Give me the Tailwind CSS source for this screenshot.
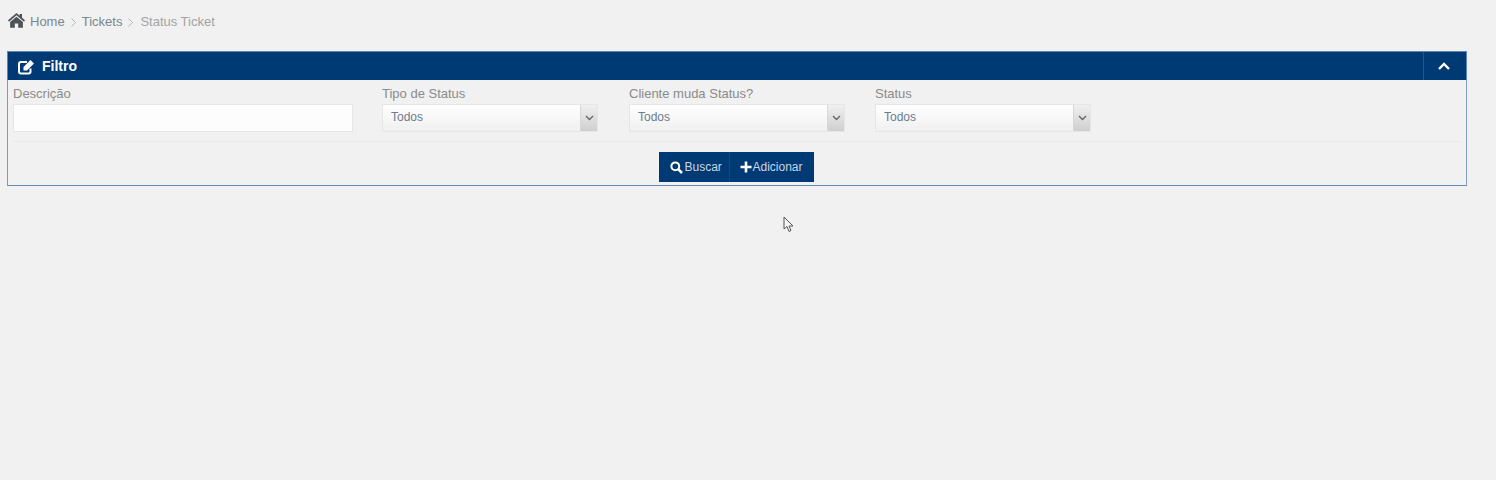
<!DOCTYPE html>
<html lang="en">
<head>
  <meta charset="UTF-8" />
  <title>Status Ticket</title>
  <script src="https://cdn.jsdelivr.net/npm/@tailwindcss/browser@4"></script>
</head>
<body class="bg-[#f1f1f1] h-[480px] overflow-hidden font-['Liberation_Sans',Arial,sans-serif]">

  <!-- Breadcrumb -->
  <nav class="h-[51px] pl-[8px] pt-[13px] flex items-start text-[13px] leading-[17px]">
    <svg class="w-[17px] h-[15px] text-[#4d5356]" viewBox="0 0 24 21" fill="currentColor">
      <path d="M12 0 L0 10.3 L1.4 12.2 L12 3.2 L22.6 12.2 L24 10.3 L19.8 6.7 V1.2 H16.4 V3.9 Z"/>
      <path d="M12 5.1 L3 12.6 V20.8 H9.6 V14.6 H14.4 V20.8 H21 V12.6 Z"/>
    </svg>
    <span class="ml-[5px] text-[#7a868d]">Home</span>
    <svg class="w-[5px] h-[9px] ml-[6px] mt-[5px] text-[#b5b5b5]" viewBox="0 0 5 9" fill="none" stroke="currentColor"><path d="M0.5 0.5 L4.5 4.5 L0.5 8.5"/></svg>
    <span class="ml-[6px] text-[#7a868d]">Tickets</span>
    <svg class="w-[5px] h-[9px] ml-[6px] mt-[5px] text-[#b5b5b5]" viewBox="0 0 5 9" fill="none" stroke="currentColor"><path d="M0.5 0.5 L4.5 4.5 L0.5 8.5"/></svg>
    <span class="ml-[7px] text-[#a3a3a3]">Status Ticket</span>
  </nav>

  <!-- Filter panel -->
  <section class="ml-[7px] w-[1460px] h-[135px] border border-[#7fa3cc] border-l-[#8f969c] border-b-[#5f8db5]">
    <header class="h-[29px] -mt-px -mx-px bg-[#003a75] border-t border-x border-[#5f86b2] flex items-center justify-between">
      <div class="flex items-center pl-[10px] pt-[1px] text-white">
        <svg class="w-[17px] h-[16px]" viewBox="0 0 17 16" fill="none">
          <path d="M12.5 9.5 V12.5 A2 2 0 0 1 10.5 14.5 H3 A2 2 0 0 1 1 12.5 V5 A2 2 0 0 1 3 3 H9" stroke="white" stroke-width="2"/>
          <path d="M5.5 8 L12.5 1 L16 4.5 L9 11.5 H5.5 Z" fill="white"/>
        </svg>
        <span class="ml-[7px] text-[14px] font-bold">Filtro</span>
      </div>
      <div class="w-[43px] h-full border-l border-[#22558a] flex items-center justify-center pr-[2px]">
        <svg class="w-[12px] h-[8px]" viewBox="0 0 12 8" fill="none" stroke="white" stroke-width="2.4"><path d="M1 7 L6 2 L11 7"/></svg>
      </div>
    </header>

    <!-- Fields -->
    <div class="flex pl-[5px] pt-[5px] text-[13px] text-[#8a8a8a]">
      <label class="block w-[340px]">
        <span class="block leading-[18px]">Descrição</span>
        <input class="block mt-[1px] w-full h-[28px] bg-[#fdfdfd] border border-[#e6e6e6] outline-none" />
      </label>
      <div class="w-[216px] ml-[29px]">
        <span class="block leading-[18px]">Tipo de Status</span>
        <div class="mt-[1px] h-[28px] flex border border-[#e6e6e6] bg-gradient-to-b from-white to-[#f0f0f0]">
          <span class="flex-1 pl-[8px] text-[12px] leading-[25px] text-[#6b7c8c]">Todos</span>
          <span class="w-[17px] border-l border-[#d8d8d8] bg-gradient-to-b from-[#f0f0f0] to-[#cfcfcf] flex items-center justify-center">
            <svg class="w-[9px] h-[6px]" viewBox="0 0 9 6" fill="none" stroke="#666" stroke-width="1.4"><path d="M1 1 L4.5 4.5 L8 1"/></svg>
          </span>
        </div>
      </div>
      <div class="w-[216px] ml-[31px]">
        <span class="block leading-[18px]">Cliente muda Status?</span>
        <div class="mt-[1px] h-[28px] flex border border-[#e6e6e6] bg-gradient-to-b from-white to-[#f0f0f0]">
          <span class="flex-1 pl-[8px] text-[12px] leading-[25px] text-[#6b7c8c]">Todos</span>
          <span class="w-[17px] border-l border-[#d8d8d8] bg-gradient-to-b from-[#f0f0f0] to-[#cfcfcf] flex items-center justify-center">
            <svg class="w-[9px] h-[6px]" viewBox="0 0 9 6" fill="none" stroke="#666" stroke-width="1.4"><path d="M1 1 L4.5 4.5 L8 1"/></svg>
          </span>
        </div>
      </div>
      <div class="w-[216px] ml-[30px]">
        <span class="block leading-[18px]">Status</span>
        <div class="mt-[1px] h-[28px] flex border border-[#e6e6e6] bg-gradient-to-b from-white to-[#f0f0f0]">
          <span class="flex-1 pl-[8px] text-[12px] leading-[25px] text-[#6b7c8c]">Todos</span>
          <span class="w-[17px] border-l border-[#d8d8d8] bg-gradient-to-b from-[#f0f0f0] to-[#cfcfcf] flex items-center justify-center">
            <svg class="w-[9px] h-[6px]" viewBox="0 0 9 6" fill="none" stroke="#666" stroke-width="1.4"><path d="M1 1 L4.5 4.5 L8 1"/></svg>
          </span>
        </div>
      </div>
    </div>

    <hr class="mt-[9px] mx-[5px] border-t border-[#e9e9e9]" />

    <!-- Buttons -->
    <div class="mt-[10px] flex justify-center pr-[2px]">
      <div class="flex h-[30px] text-[12px] text-[#c9d6e4] bg-[#003a75]">
        <button class="w-[71px] flex items-center gap-[2px] pl-[11px] border-r border-[#0a4a8c]">
          <svg class="w-[13px] h-[13px]" viewBox="0 0 13 13" fill="none" stroke="white"><circle cx="5.3" cy="5.3" r="3.9" stroke-width="2"/><path d="M8.2 8.2 L12 12" stroke-width="2.6"/></svg>
          Buscar
        </button>
        <button class="w-[84px] flex items-center gap-px pl-[10px]">
          <svg class="w-[12px] h-[12px]" viewBox="0 0 12 12" fill="none" stroke="white" stroke-width="2.6"><path d="M6 0.5 V11.5 M0.5 6 H11.5"/></svg>
          Adicionar
        </button>
      </div>
    </div>
  </section>

  <!-- Mouse pointer -->
  <svg class="absolute left-[783px] top-[216px] w-[12px] h-[17px]" viewBox="0 0 12 17" fill="#f5f5f5" stroke="#555" stroke-width="1"><path d="M1 1 V13 L4 10.5 L6 15.5 L8 14.5 L6 10 H10 Z"/></svg>
</body>
</html>
